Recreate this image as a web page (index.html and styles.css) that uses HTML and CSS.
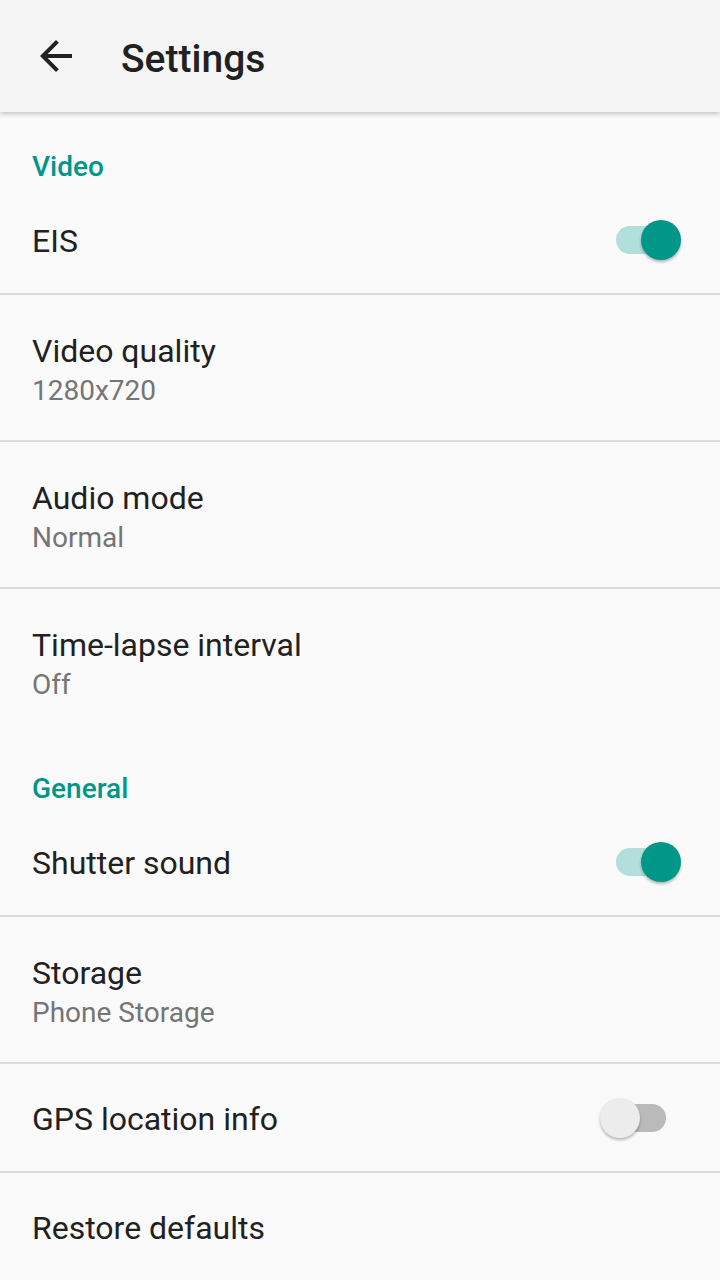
FILE: index.html
```html
<!DOCTYPE html>
<html lang="en">
<head>
    <meta charset="UTF-8">
    <meta name="viewport" content="width=device-width, initial-scale=1.0">
    <title>Settings</title>
    <link rel="stylesheet" href="styles.css">
</head>
<body>
    <header class="appbar">
        <span class="back">
            <svg viewBox="0 0 24 24" width="48" height="48"><path d="M20 11H7.83l5.59-5.59L12 4l-8 8 8 8 1.41-1.41L7.83 13H20v-2z" fill="#212121"/></svg>
        </span>
        <h1 class="title">Settings</h1>
    </header>

    <div class="list">
        <div class="category">Video</div>
        <div class="pref single">
            <span class="pref-title">EIS</span>
            <span class="switch on"><span class="track"></span><span class="thumb"></span></span>
        </div>
        <div class="pref double">
            <span class="pref-title">Video quality</span>
            <span class="summary">1280x720</span>
        </div>
        <div class="pref double">
            <span class="pref-title">Audio mode</span>
            <span class="summary">Normal</span>
        </div>
        <div class="pref double last">
            <span class="pref-title">Time-lapse interval</span>
            <span class="summary">Off</span>
        </div>

        <div class="category">General</div>
        <div class="pref single">
            <span class="pref-title">Shutter sound</span>
            <span class="switch on"><span class="track"></span><span class="thumb"></span></span>
        </div>
        <div class="pref double">
            <span class="pref-title">Storage</span>
            <span class="summary">Phone Storage</span>
        </div>
        <div class="pref single">
            <span class="pref-title">GPS location info</span>
            <span class="switch"><span class="track"></span><span class="thumb"></span></span>
        </div>
        <div class="pref single last">
            <span class="pref-title">Restore defaults</span>
        </div>
    </div>
</body>
</html>
```

FILE: styles.css
```css
body {
    margin: 0;
    font-family: Roboto, "Noto Sans", sans-serif;
    background-color: #fafafa;
    color: #212121;
    overflow: hidden;
}
.appbar {
    position: relative;
    z-index: 2;
    height: 112px;
    display: flex;
    align-items: center;
    padding-left: 32px;
    background: #f5f5f5;
    box-shadow: 0 2px 5px rgba(0, 0, 0, 0.22);
}
.back {
    width: 48px;
    height: 48px;
    display: flex;
}
.title {
    margin: 5px 0 0 41px;
    font-size: 39px;
    font-weight: 500;
    line-height: 48px;
}
.category {
    box-sizing: border-box;
    height: 74px;
    padding: 39px 32px 0;
    font-size: 28px;
    font-weight: 500;
    line-height: 32px;
    color: #009688;
}
.pref {
    box-sizing: border-box;
    display: flex;
    align-items: center;
    justify-content: space-between;
    padding: 0 39px 0 32px;
    border-bottom: 2px solid #dcdcdc;
}
.pref.last {
    border-bottom: none;
}
.single {
    height: 109px;
}
.single .pref-title {
    padding-top: 2px;
}
.single.last {
    height: 107px;
}
.double {
    height: 147px;
    flex-direction: column;
    align-items: flex-start;
    justify-content: center;
    padding-top: 7px;
}
.double.last {
    height: 145px;
}
.pref-title {
    font-size: 32px;
    line-height: 40px;
}
.summary {
    font-size: 28px;
    line-height: 40px;
    color: #757575;
}
.switch {
    position: relative;
    width: 81px;
    height: 40px;
    display: flex;
    align-items: center;
}
.track {
    margin-left: 16px;
    width: 50px;
    height: 28px;
    border-radius: 14px;
    background: #bababa;
}
.switch.on .track {
    background: #b2dfdb;
}
.thumb {
    position: absolute;
    left: 0;
    top: 0;
    width: 40px;
    height: 40px;
    border-radius: 50%;
    background: #ececec;
    box-shadow: 0 2px 3px rgba(0, 0, 0, 0.28);
}
.switch.on .thumb {
    left: 41px;
    background: #009688;
}
```
